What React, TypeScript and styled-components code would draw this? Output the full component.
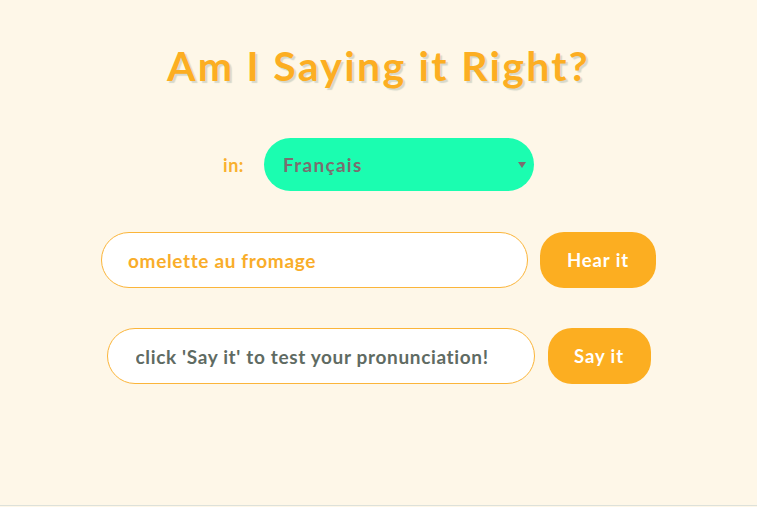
import React from "react";
import styled, { createGlobalStyle } from "styled-components";

const Global = createGlobalStyle`
  html, body { margin: 0; padding: 0; background: #fef7e8; }
  body { font-family: Lato, "Open Sans", sans-serif; }
`;

const Page = styled.main`
  box-sizing: border-box;
  height: 506px;
  background: #fef7e8;
  border-bottom: 1px solid #dde1da;
  display: flex;
  flex-direction: column;
  align-items: center;
  padding-top: 38px;
`;

const Title = styled.h1`
  margin: 0;
  font-family: Lato, sans-serif;
  font-weight: 700;
  font-size: 41px;
  line-height: 56px;
  color: #fcae22;
  text-shadow: 2px 2px 1px #d6d9cc;
  letter-spacing: 2.3px;
`;

const Row = styled.div<{ $gap: number; $top: number }>`
  display: flex;
  align-items: center;
  gap: ${(p) => p.$gap}px;
  margin-top: ${(p) => p.$top}px;
`;

const Label = styled.span`
  font-size: 18px;
  font-weight: 700;
  color: #f9b02e;
  letter-spacing: 0.5px;
`;

const SelectWrap = styled.div`
  position: relative;
  width: 270px;
  height: 53px;
`;

const Select = styled.select`
  appearance: none;
  width: 100%;
  height: 100%;
  border: none;
  border-radius: 27px;
  background: #1bfdb0;
  color: #7c6d6f;
  font-family: Lato, sans-serif;
  font-size: 19px;
  font-weight: 700;
  letter-spacing: 1.3px;
  padding: 0 19px;
  outline: none;
`;

const Caret = styled.span`
  position: absolute;
  right: 8px;
  top: 24px;
  width: 0;
  height: 0;
  border-left: 4px solid transparent;
  border-right: 4px solid transparent;
  border-top: 6px solid #7c6d6f;
  pointer-events: none;
`;

const Field = styled.input<{ $color: string; $width: number; $pad: number }>`
  box-sizing: border-box;
  width: ${(p) => p.$width}px;
  height: 56px;
  border: 1px solid #fbb53a;
  border-radius: 28px;
  background: #fff;
  padding: 0 0 0 ${(p) => p.$pad}px;
  font-family: Lato, sans-serif;
  font-size: 19px;
  font-weight: 700;
  letter-spacing: 0.65px;
  color: ${(p) => p.$color};
  outline: none;
`;

const Button = styled.button<{ $width: number }>`
  width: ${(p) => p.$width}px;
  height: 56px;
  padding: 0;
  border: none;
  border-radius: 24px;
  background: #fcae21;
  color: #fff;
  font-family: Lato, sans-serif;
  font-size: 18.5px;
  font-weight: 700;
  letter-spacing: 0.9px;
`;

export default function App() {
  return (
    <>
      <Global />
      <Page>
        <Title>Am I Saying it Right?</Title>
        <Row $gap={20} $top={44}>
          <Label>in:</Label>
          <SelectWrap>
            <Select defaultValue="fr">
              <option value="fr">Français</option>
            </Select>
            <Caret />
          </SelectWrap>
        </Row>
        <Row $gap={12} $top={41}>
          <Field $color="#f9ad2a" $width={427} $pad={26} readOnly value="omelette au fromage" />
          <Button $width={116}>Hear it</Button>
        </Row>
        <Row $gap={13} $top={40}>
          <Field $color="#5f6b63" $width={428} $pad={28} readOnly value="click 'Say it' to test your pronunciation!" />
          <Button $width={103}>Say it</Button>
        </Row>
      </Page>
    </>
  );
}
